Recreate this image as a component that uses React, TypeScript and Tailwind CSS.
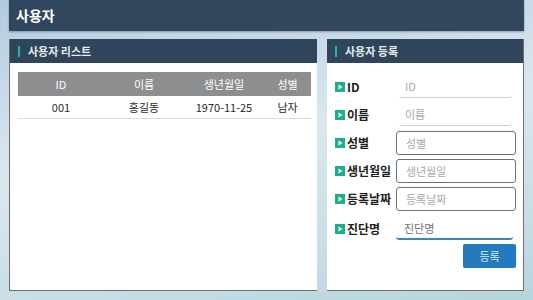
import React from "react";

const font = { fontFamily: '"Noto Sans CJK KR", "Noto Sans", sans-serif' };

interface Field {
  label: string;
  kind: "line" | "box";
}

const fields: Field[] = [
  { label: "ID", kind: "line" },
  { label: "이름", kind: "line" },
  { label: "성별", kind: "box" },
  { label: "생년월일", kind: "box" },
  { label: "등록날짜", kind: "box" },
];

function Marker() {
  return (
    <span className="w-[10px] h-[10px] bg-[#1fae8c] flex items-center justify-center mr-[2px]">
      <svg width="5" height="6" viewBox="0 0 5 6">
        <path d="M0.5 0.5 L4.5 3 L0.5 5.5 Z" fill="#ffffff" />
      </svg>
    </span>
  );
}

function PanelTitle({ title }: { title: string }) {
  return (
    <div className="h-[24px] bg-[#2e455b] flex items-center pl-[8px] shrink-0">
      <span className="w-[2px] h-[11px] bg-[#22b596] mr-[8px]" />
      <span className="text-[11px] font-bold text-[#e4e8ec]">{title}</span>
    </div>
  );
}

function FieldInput({ field }: { field: Field }) {
  if (field.kind === "box") {
    return (
      <div className="ml-auto mr-[7px] w-[120px] h-[24px] border border-[#6d7379] rounded-[3px] flex items-center pl-[9px] text-[11px] text-[#a6a9ad]">
        {field.label}
      </div>
    );
  }
  return (
    <div className="ml-auto mr-[11px] w-[113px] h-[22px] border-b border-[#cfd2d5] rounded-b-[3px] flex items-center pl-[6px] text-[11px] text-[#a6a9ad]">
      {field.label}
    </div>
  );
}

function App() {
  return (
    <div
      className="w-[533px] h-[300px] overflow-hidden bg-[linear-gradient(170deg,#b3cbe0_0%,#dbe7ef_45%,#c7dde6_80%,#b5d4dc_100%)] flex flex-col px-[9px]"
      style={font}
    >
      <div className="h-[31px] bg-[#30475e] flex items-center pl-[7px] shadow-[0_1px_2px_rgba(0,0,0,0.3)] shrink-0">
        <span className="text-[14px] font-bold text-white">사용자</span>
      </div>

      <div className="flex gap-[10px] mt-[8px] h-[252px]">
        <div className="w-[308px] bg-white border-l border-b border-[#6b6f74] flex flex-col">
          <PanelTitle title="사용자 리스트" />
          <div className="px-[8px] pt-[9px]">
            <table className="w-[293px] text-[11px] border-collapse">
              <thead>
                <tr className="bg-[#8d8e90] text-white h-[24px]">
                  <th className="font-normal w-[86px]">ID</th>
                  <th className="font-normal w-[80px]">이름</th>
                  <th className="font-normal w-[80px]">생년월일</th>
                  <th className="font-normal">성별</th>
                </tr>
              </thead>
              <tbody>
                <tr className="h-[22px] border-b border-[#dcdcdc] text-[#2a2a2a]">
                  <td className="text-center">001</td>
                  <td className="text-center">홍길동</td>
                  <td className="text-center">1970-11-25</td>
                  <td className="text-center">남자</td>
                </tr>
              </tbody>
            </table>
          </div>
        </div>

        <div className="w-[198px] bg-white border-r border-b border-[#6b6f74] flex flex-col">
          <PanelTitle title="사용자 등록" />
          <div className="flex flex-col pt-[10px]">
            {fields.map((f) => (
              <div key={f.label} className="h-[28px] flex items-center pl-[8px]">
                <Marker />
                <span className="text-[12px] font-bold text-[#1d1d1d]">{f.label}</span>
                <FieldInput field={f} />
              </div>
            ))}
            <div className="h-[28px] mt-[2px] flex items-center pl-[8px]">
              <Marker />
              <span className="text-[12px] font-bold text-[#1d1d1d]">진단명</span>
              <div className="ml-auto mr-[10px] w-[117px] h-[22px] border-b-2 border-[#3a86c4] rounded-b-[3px] flex items-center pl-[8px] text-[11px] text-[#6e7277]">
                진단명
              </div>
            </div>
            <div className="flex justify-end pr-[7px] mt-[1px]">
              <button className="w-[53px] h-[24px] bg-[#2379bd] rounded-[2px] text-[11px] text-[#d8e8f4]">
                등록
              </button>
            </div>
          </div>
        </div>
      </div>
    </div>
  );
}

export default App;
